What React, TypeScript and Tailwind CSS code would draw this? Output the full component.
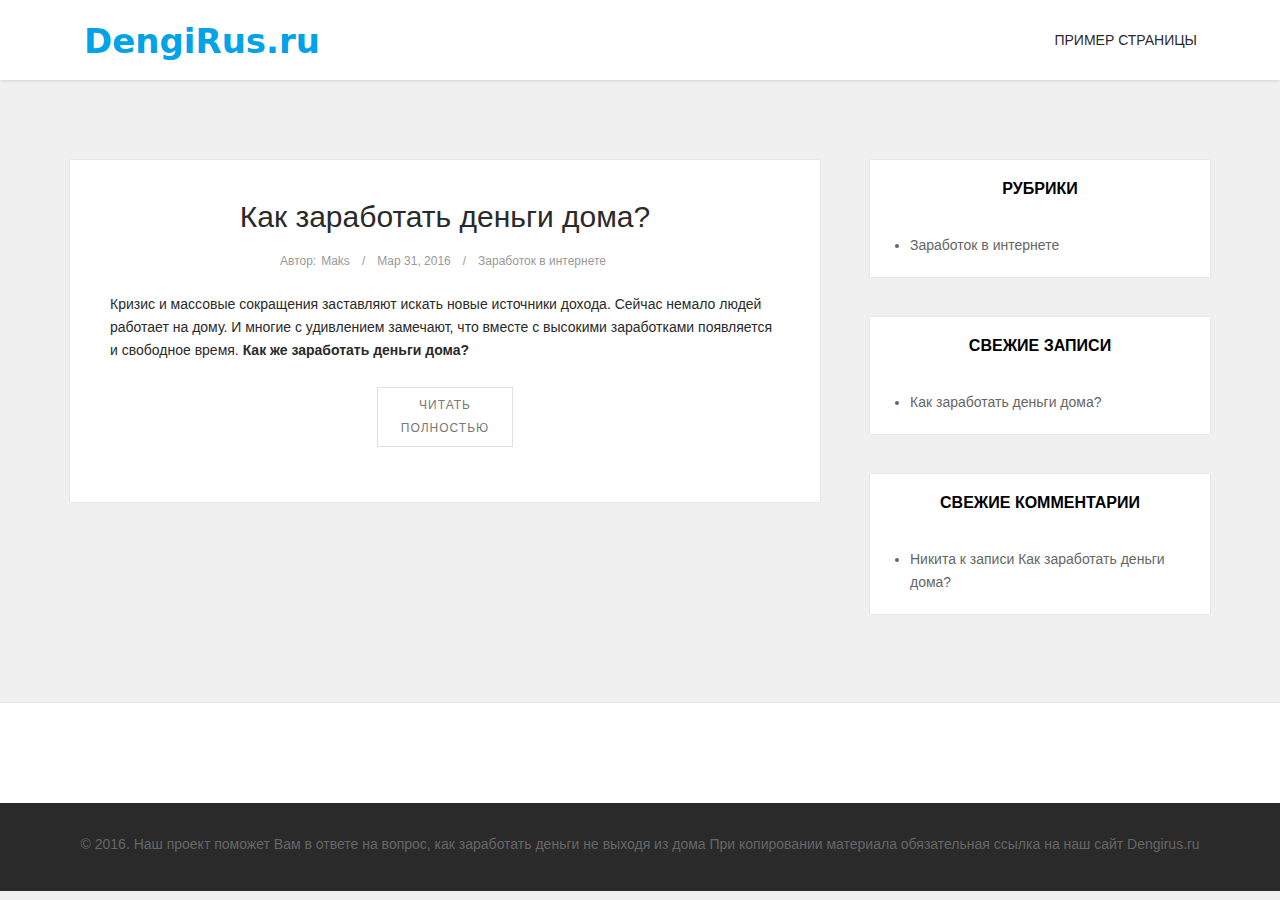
import React from 'react';

const widgets = [
  { title: 'Рубрики', items: ['Заработок в интернете'] },
  { title: 'Свежие записи', items: ['Как заработать деньги дома?'] },
  { title: 'Свежие комментарии', items: ['Никита к записи Как заработать деньги дома?'] },
];

function Header() {
  return (
    <header className="relative bg-white shadow-[0_1px_3px_rgba(0,0,0,0.12)]">
      <div className="mx-auto flex h-20 max-w-[1170px] items-center justify-between px-7">
        <a href="#" className="pt-0.5 pl-px font-['DejaVu_Sans',sans-serif] text-[34px] font-bold leading-10 text-[#00a2e8]">
          DengiRus.ru
        </a>
        <nav>
          <a href="#" className="text-sm uppercase text-[#2a2a2a]">Пример страницы</a>
        </nav>
      </div>
    </header>
  );
}

function Post() {
  return (
    <article className="bg-white px-10 pt-10 pb-[55px] shadow-[0_0_2px_rgba(0,0,0,0.1)]">
      <h2 className="text-center text-[30px] leading-[33px] text-[#2a2a2a]">
        <a href="#">Как заработать деньги дома?</a>
      </h2>
      <div className="mt-[17px] flex justify-center pr-1 text-xs leading-[23px] text-[#999]">
        <span>Автор:</span>
        <a href="#" className="ml-[5px]">Maks</a>
        <span className="mx-3">/</span>
        <span>Мар 31, 2016</span>
        <span className="mx-3">/</span>
        <a href="#">Заработок в интернете</a>
      </div>
      <p className="mt-5 text-sm leading-[23px] text-[#2a2a2a]">
        Кризис и массовые сокращения заставляют искать новые источники дохода. Сейчас немало людей
        работает на дому. И многие с удивлением замечают, что вместе с высокими заработками появляется
        и свободное время. <strong>Как же заработать деньги дома?</strong>
      </p>
      <a
        href="#"
        className="mx-auto mt-[25px] block w-34 border border-[#e0e0e0] px-5 py-[6px] text-center text-xs leading-[23px] tracking-[1px] uppercase text-[#777]"
      >
        Читать полностью
      </a>
    </article>
  );
}

function Sidebar() {
  return (
    <aside className="flex flex-col gap-10">
      {widgets.map(({ title, items }) => (
        <section key={title} className="bg-white p-5 shadow-[0_0_2px_rgba(0,0,0,0.1)]">
          <h3 className="text-center text-base leading-[18px] font-bold uppercase text-black">{title}</h3>
          <ul className="mt-9 list-disc pl-5 text-sm leading-[23px] text-[#666]">
            {items.map(item => (
              <li key={item}><a href="#">{item}</a></li>
            ))}
          </ul>
        </section>
      ))}
    </aside>
  );
}

export default function App() {
  return (
    <div className="min-h-screen bg-[#f0f0f0] font-['Liberation_Sans',Arial,sans-serif]">
      <Header />

      <main className="mx-auto grid max-w-[1140px] grid-cols-1 items-start gap-[50px] pt-20 pb-22 md:grid-cols-[minmax(0,1fr)_340px]">
        <Post />
        <Sidebar />
      </main>

      <footer>
        <div className="h-[101px] border-t border-[#e8e8e8] bg-white" />
        <div className="bg-[#2a2a2a] px-5 pt-[30px] pb-[35px]">
          <p className="text-center text-sm leading-[23px] text-[#666]">
            © 2016. Наш проект поможет Вам в ответе на вопрос, как заработать деньги не выходя из дома
            При копировании материала обязательная ссылка на наш сайт Dengirus.ru
          </p>
        </div>
      </footer>
    </div>
  );
}
